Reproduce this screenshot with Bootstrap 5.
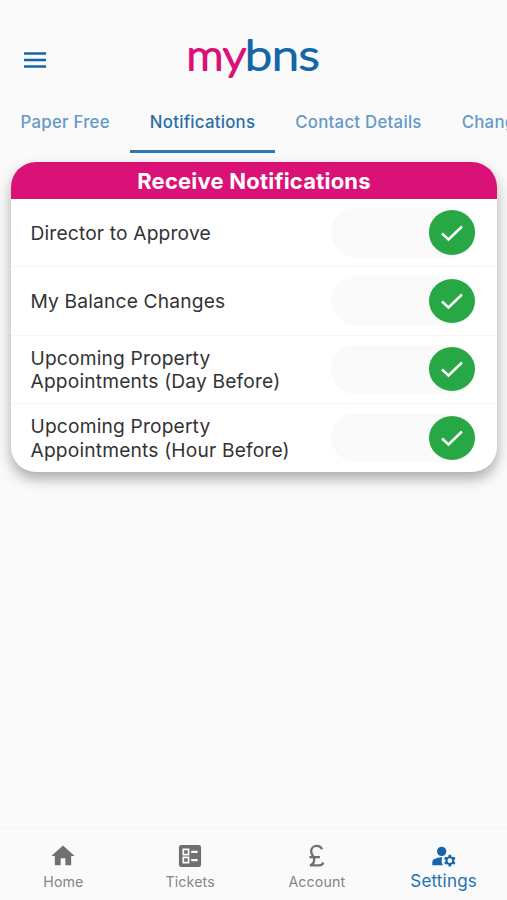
<!DOCTYPE html>
<html lang="en">
<head>
<meta charset="utf-8">
<meta name="viewport" content="width=device-width, initial-scale=1">
<title>mybns – Settings</title>
<link href="https://cdn.jsdelivr.net/npm/bootstrap@5.3.0/dist/css/bootstrap.min.css" rel="stylesheet">
<style>
  :root { --brand-blue: #1565a9; --brand-pink: #da1278; }
  body { background: #fafafa; font-family: Inter, "Liberation Sans", sans-serif; color: #333; height: 900px; }
  .app-header { height: 92px; padding-top: 26px; display: grid; grid-template-columns: 1fr auto 1fr; }
  .menu-btn { margin-left: 24px; margin-top: 1px; line-height: 0; color: var(--brand-blue); }
  .brand-logo { font: 300 42px Lato, sans-serif; stroke-width: 2px; stroke-linejoin: round; }
  .brand-my { fill: var(--brand-pink); stroke: var(--brand-pink); }
  .brand-bns { fill: var(--brand-blue); stroke: var(--brand-blue); }
  .settings-tabs { height: 61px; }
  .settings-tabs .nav-link { color: #6599c8; font-size: 16.8px; line-height: 24px; font-weight: 500; letter-spacing: .26px; padding: 18px 20px 0; height: 60.5px; border-bottom: 3px solid transparent; white-space: nowrap; }
  .settings-tabs .nav-link.active { color: #2a6ea9; border-bottom-color: #3077b0; }
  .settings-tabs .nav-link:first-child { padding-left: 20.5px; }
  .notify-card { margin: 9px 10px 0 11px; height: 310px; border: 0; border-radius: 25px; overflow: hidden; box-shadow: 0 7px 14px rgba(0,0,0,.32); background: #fff; }
  .notify-title { height: 37px; font-size: 22px; line-height: 38px; font-weight: 700; letter-spacing: .22px; background: var(--brand-pink); }
  .notify-row { height: 68.5px; padding: 0 22px 0 19.5px; font-size: 19.2px; line-height: 23.4px; letter-spacing: .17px; border-bottom: 1px solid #f6f6f6; }
  .notify-row > span { padding-top: 2px; }
  .notify-row:last-child { border-bottom: 0; }
  .switch-track { width: 144px; height: 49px; border-radius: 25px; background: #fafafa; }
  .switch-thumb { width: 46.5px; height: 44.5px; border-radius: 50%; background: #28a745; }
  .bottom-bar { height: 72px; border-top: 1px solid #f5f5f5; padding-top: 13px; }
  .bottom-bar a { color: #858585; font-size: 14.2px; line-height: 20px; letter-spacing: .15px; }
  .bottom-bar svg { color: #707070; margin-bottom: 2px; }
  .bottom-bar a.current { color: #2471b0; font-size: 17px; letter-spacing: .2px; }
  .bottom-bar a.current svg { color: var(--brand-blue); margin-bottom: 1px; }
</style>
<script src="https://cdn.jsdelivr.net/npm/bootstrap@5.3.0/dist/js/bootstrap.bundle.min.js"></script>
</head>
<body class="d-flex flex-column overflow-hidden">
  <header class="app-header align-items-center">
    <a class="menu-btn" href="#" aria-label="Menu"><svg width="22" height="16" viewBox="0 0 22 16"><path d="M0 1.500h22M0 8h22M0 14.500h22" stroke="currentColor" stroke-width="2.300"/></svg></a>
    <svg class="brand-logo" width="140" height="60" viewBox="0 0 140 60"><text class="brand-my" x="2.500" y="41" textLength="59.500" lengthAdjust="spacingAndGlyphs">my</text><text class="brand-bns" x="61" y="41" textLength="74.500" lengthAdjust="spacingAndGlyphs">bns</text></svg>
  </header>
  <nav class="nav settings-tabs flex-nowrap overflow-hidden">
    <a class="nav-link" href="#">Paper Free</a>
    <a class="nav-link active" href="#">Notifications</a>
    <a class="nav-link" href="#">Contact Details</a>
    <a class="nav-link" href="#">Change Password</a>
  </nav>
  <main class="flex-grow-1">
    <section class="card notify-card">
      <h1 class="notify-title text-white text-center m-0">Receive Notifications</h1>
      <div class="notify-row d-flex align-items-center justify-content-between"><span>Director to Approve</span>
        <div class="switch-track d-flex align-items-center justify-content-end"><div class="switch-thumb d-flex align-items-center justify-content-center"><svg width="24" height="18" viewBox="0 0 24 18"><path d="M2 9.500l6.500 6L22 2.500" fill="none" stroke="#fff" stroke-width="2.500"/></svg></div></div></div>
      <div class="notify-row d-flex align-items-center justify-content-between"><span>My Balance Changes</span>
        <div class="switch-track d-flex align-items-center justify-content-end"><div class="switch-thumb d-flex align-items-center justify-content-center"><svg width="24" height="18" viewBox="0 0 24 18"><path d="M2 9.500l6.500 6L22 2.500" fill="none" stroke="#fff" stroke-width="2.500"/></svg></div></div></div>
      <div class="notify-row d-flex align-items-center justify-content-between"><span>Upcoming Property<br>Appointments (Day Before)</span>
        <div class="switch-track d-flex align-items-center justify-content-end"><div class="switch-thumb d-flex align-items-center justify-content-center"><svg width="24" height="18" viewBox="0 0 24 18"><path d="M2 9.500l6.500 6L22 2.500" fill="none" stroke="#fff" stroke-width="2.500"/></svg></div></div></div>
      <div class="notify-row d-flex align-items-center justify-content-between"><span>Upcoming Property<br>Appointments (Hour Before)</span>
        <div class="switch-track d-flex align-items-center justify-content-end"><div class="switch-thumb d-flex align-items-center justify-content-center"><svg width="24" height="18" viewBox="0 0 24 18"><path d="M2 9.500l6.500 6L22 2.500" fill="none" stroke="#fff" stroke-width="2.500"/></svg></div></div></div>
    </section>
  </main>
  <nav class="bottom-bar row g-0 text-center">
    <a class="col d-flex flex-column align-items-center text-decoration-none" href="#"><svg width="28" height="28" viewBox="0 0 24 24" fill="currentColor"><path d="M10 20v-6h4v6h5v-8h3L12 3 2 12h3v8z"/></svg>Home</a>
    <a class="col d-flex flex-column align-items-center text-decoration-none" href="#"><svg width="28" height="28" viewBox="0 0 24 24" fill="currentColor" fill-rule="evenodd"><path d="M4.500 2.500h15a2 2 0 0 1 2 2v15a2 2 0 0 1-2 2h-15a2 2 0 0 1-2-2v-15a2 2 0 0 1 2-2zM13 7.500v2h5.500v-2zM13 14.500v2h5.500v-2zM5.500 5.500v6h6v-6zM5.500 12.500v6h6v-6zM7 7h3v3H7zM7 14h3v3H7z"/></svg>Tickets</a>
    <a class="col d-flex flex-column align-items-center text-decoration-none" href="#"><svg width="28" height="28" viewBox="0 0 24 24"><path d="M16.300 6.300C15.500 4.400 13.800 3.300 11.700 3.300 9 3.300 7 5.400 7 8c0 3 2.600 4.300 2.600 7.200C9.600 17.700 8 19.400 6 20H14c1.700 0 2.900-.900 3.300-2.500M5.500 13H14.500" fill="none" stroke="currentColor" stroke-width="2"/></svg>Account</a>
    <a class="col d-flex flex-column align-items-center text-decoration-none current" href="#"><svg width="28" height="28" viewBox="0 0 24 24" fill="currentColor"><circle cx="10" cy="8" r="4"/><path d="M10.670 13.020C10.450 13.010 10.230 13 10 13c-2.420 0-4.680.670-6.610 1.820C2.510 15.340 2 16.320 2 17.350V20h9.260C10.470 18.870 10 17.490 10 16c0-1.070.250-2.070.670-2.980zM20.750 16c0-.220-.030-.420-.060-.630l1.140-1.010-1-1.730-1.450.490c-.320-.270-.680-.480-1.080-.630L18 11h-2l-.300 1.490c-.400.150-.760.360-1.080.630l-1.450-.490-1 1.730 1.140 1.010c-.030.210-.060.410-.060.630s.030.420.060.630l-1.140 1.010 1 1.730 1.450-.490c.320.270.680.480 1.080.630L16 21h2l.300-1.490c.400-.150.760-.360 1.080-.630l1.450.490 1-1.730-1.140-1.010c.030-.210.060-.410.060-.630zM17 18a2 2 0 1 1 0-4 2 2 0 0 1 0 4z"/></svg>Settings</a>
  </nav>
</body>
</html>
